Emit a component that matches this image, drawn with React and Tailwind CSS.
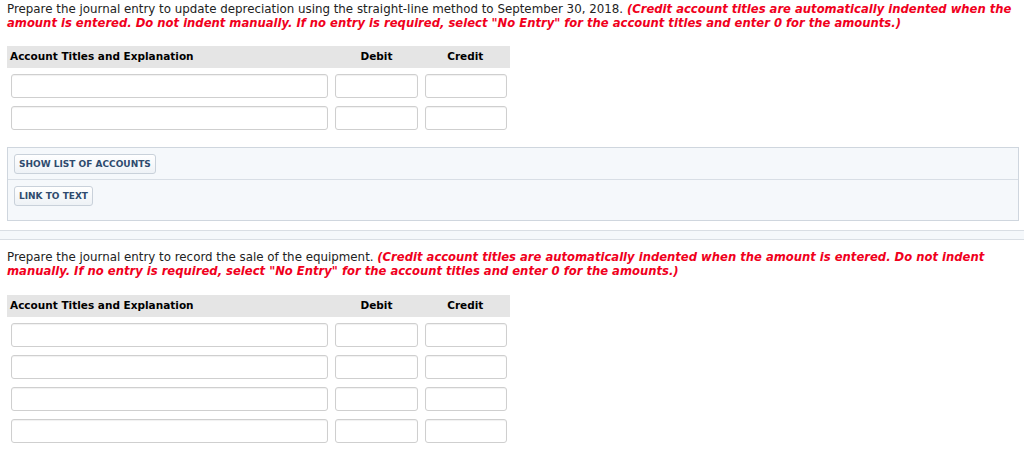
export default function App() {
  return (
    <div className="w-[1024px] h-[453px] overflow-hidden bg-white text-[#222] font-['DejaVu_Sans',sans-serif] text-[11.85px]">
      <div className="px-[7px]">
        <p className="pt-[2px] leading-[14px]">
          Prepare the journal entry to update depreciation using the straight-line method to September 30, 2018.{" "}
          <span className="font-bold italic text-[11.6px] text-[#f0001c]">
            (Credit account titles are automatically indented when the amount is entered. Do not indent manually. If no entry is required, select "No Entry" for the account titles and enter 0 for the amounts.)
          </span>
        </p>
        <JournalTable rows={2} className="mt-[16px]" />
      </div>

      {/* Buttons panel */}
      <div className="mt-[17px] ml-[7px] mr-[5px] border border-[#cfd6de] bg-[#f5f8fb]">
        <div className="h-[32px] pt-[6px] pl-[6px] border-b border-[#d8dee5]">
          <Btn>SHOW LIST OF ACCOUNTS</Btn>
        </div>
        <div className="h-[40px] pt-[6px] pl-[6px]">
          <Btn>LINK TO TEXT</Btn>
        </div>
      </div>

      {/* Section separator */}
      <div className="mt-[9px] h-[10px] border-y border-[#d9dee4] bg-[#f5f8fb]" />

      <div className="px-[7px]">
        <p className="mt-[10px] leading-[14px]">
          Prepare the journal entry to record the sale of the equipment.{" "}
          <span className="font-bold italic text-[11.6px] text-[#f0001c]">
            (Credit account titles are automatically indented when the amount is entered. Do not indent manually. If no entry is required, select "No Entry" for the account titles and enter 0 for the amounts.)
          </span>
        </p>
        <JournalTable rows={4} className="mt-[17px]" />
      </div>
    </div>
  );
}

function Btn({ children }) {
  return (
    <button className="h-[20px] px-[4px] rounded-[3px] border border-[#c9d1da] bg-gradient-to-b from-white to-[#eef2f6] text-[9px] font-bold text-[#2f4b6e] leading-none">
      {children}
    </button>
  );
}

function JournalTable({ rows, className }) {
  return (
    <div className={"w-[503px] " + className}>
      <div className="flex h-[22px] items-center bg-[#e5e5e5] text-[10.5px] font-bold text-black">
        <div className="w-[328px] pl-[3px]">Account Titles and Explanation</div>
        <div className="w-[83px] ml-[7px] pr-[8px] text-center">Debit</div>
        <div className="w-[82px] ml-[7px] pr-[8px] text-center">Credit</div>
      </div>
      <div className="mt-[6px] flex flex-col gap-[8px]">
        {Array.from({ length: rows }).map((_, i) => (
          <div key={i} className="flex pl-[4px]">
            <Field w="w-[317px]" />
            <Field w="w-[83px] ml-[7px]" />
            <Field w="w-[82px] ml-[7px]" />
          </div>
        ))}
      </div>
    </div>
  );
}

function Field({ w }) {
  return (
    <input
      type="text"
      className={"h-[24px] rounded-[3px] border border-[#cfcfcf] bg-white shadow-[inset_0_1px_1px_rgba(0,0,0,0.06)] outline-none " + w}
    />
  );
}
